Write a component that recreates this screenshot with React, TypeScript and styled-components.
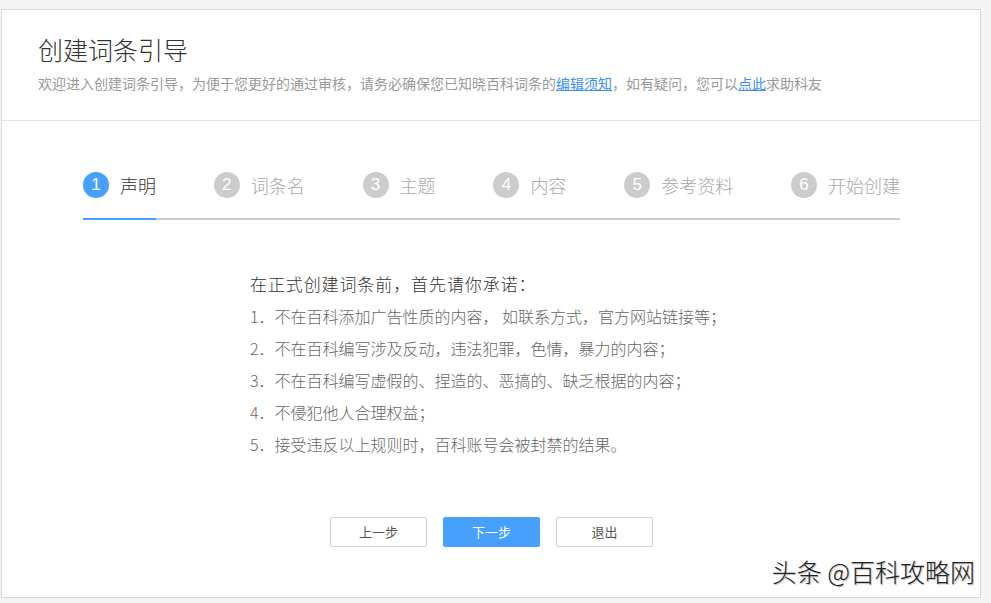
import React from 'react';
import styled, { createGlobalStyle } from 'styled-components';

const GlobalStyle = createGlobalStyle`
  body {
    margin: 0;
    background: #f4f4f4;
    font-family: 'Noto Sans CJK SC', 'Liberation Sans', sans-serif;
  }
`;

const steps = ['声明', '词条名', '主题', '内容', '参考资料', '开始创建'];

const rules = [
  '1．不在百科添加广告性质的内容， 如联系方式，官方网站链接等；',
  '2．不在百科编写涉及反动，违法犯罪，色情，暴力的内容；',
  '3．不在百科编写虚假的、捏造的、恶搞的、缺乏根据的内容；',
  '4．不侵犯他人合理权益；',
  '5．接受违反以上规则时，百科账号会被封禁的结果。',
];

function App() {
  return (
    <Page>
      <GlobalStyle />
      <Panel>
        <Header>
          <Title>创建词条引导</Title>
          <Subtitle>
            欢迎进入创建词条引导，为便于您更好的通过审核，请务必确保您已知晓百科词条的
            <Link>编辑须知</Link>，如有疑问，您可以<Link>点此</Link>求助科友
          </Subtitle>
        </Header>
        <Body>
          <StepBar>
            {steps.map((name, i) => (
              <Step key={name} active={i === 0}>
                <Circle active={i === 0}>{i + 1}</Circle>
                <StepName active={i === 0}>{name}</StepName>
              </Step>
            ))}
          </StepBar>
          <Content>
            <Heading>在正式创建词条前，首先请你承诺：</Heading>
            {rules.map((r) => (
              <Rule key={r}>{r}</Rule>
            ))}
          </Content>
          <Buttons>
            <Button>上一步</Button>
            <Button primary>下一步</Button>
            <Button>退出</Button>
          </Buttons>
        </Body>
        <Watermark>头条 @百科攻略网</Watermark>
      </Panel>
    </Page>
  );
}

const Page = styled.div`
  padding: 9px 10px 5px 1px;
`;

const Panel = styled.div`
  position: relative;
  box-sizing: border-box;
  width: 980px;
  height: 589px;
  background: #fff;
  border: 1px solid #d9d9d9;
`;

const Header = styled.div`
  box-sizing: border-box;
  height: 111px;
  padding: 23px 36px 0;
  border-bottom: 1px solid #e3e3e3;
`;

const Title = styled.div`
  font-size: 25px;
  line-height: 32px;
  font-weight: 300;
  color: #333;
`;

const Subtitle = styled.div`
  margin-top: 8px;
  font-size: 14px;
  line-height: 20px;
  color: #999;
`;

const Link = styled.a`
  color: #3e8ef7;
  text-decoration: underline;
  cursor: pointer;
`;

const Body = styled.div`
  padding: 51px 80px 0 81px;
`;

const StepBar = styled.div`
  display: flex;
  justify-content: space-between;
  border-bottom: 2px solid #cccccc;
`;

const Step = styled.div<{ active?: boolean }>`
  display: flex;
  align-items: center;
  gap: 11px;
  padding-bottom: 20px;
  margin-bottom: -2px;
  border-bottom: 2px solid ${(p) => (p.active ? '#46a0fc' : 'transparent')};
`;

const Circle = styled.span<{ active?: boolean }>`
  display: flex;
  align-items: center;
  justify-content: center;
  width: 26px;
  height: 26px;
  border-radius: 50%;
  background: ${(p) => (p.active ? '#46a0fc' : '#cccccc')};
  color: #fff;
  font-family: 'Liberation Sans', sans-serif;
  font-size: 17px;
`;

const StepName = styled.span<{ active?: boolean }>`
  font-size: 18px;
  line-height: 26px;
  font-weight: 300;
  color: ${(p) => (p.active ? '#333' : '#a8a8a8')};
`;

const Content = styled.div`
  margin-top: 48px;
  padding-left: 167px;
`;

const Heading = styled.div`
  font-size: 17px;
  line-height: 32px;
  font-weight: 300;
  letter-spacing: 0.9px;
  color: #333;
`;

const Rule = styled.div`
  font-size: 16px;
  line-height: 32px;
  font-weight: 300;
  color: #666;
`;

const Buttons = styled.div`
  display: flex;
  justify-content: center;
  gap: 16px;
  margin-top: 57px;
`;

const Button = styled.button<{ primary?: boolean }>`
  box-sizing: border-box;
  width: 97px;
  height: 30px;
  border-radius: 2px;
  border: 1px solid ${(p) => (p.primary ? '#46a0fc' : '#cfcfcf')};
  background: ${(p) => (p.primary ? '#46a0fc' : '#fff')};
  color: ${(p) => (p.primary ? '#fff' : '#555')};
  font-family: 'Noto Sans CJK SC', sans-serif;
  font-size: 13px;
  line-height: 28px;
  padding: 0;
  cursor: pointer;
`;

const Watermark = styled.div`
  position: absolute;
  right: 5px;
  bottom: 8px;
  font-size: 25px;
  font-weight: 300;
  color: #222;
  text-shadow: 1px 1px 1px #bbb;
`;

export default App;
